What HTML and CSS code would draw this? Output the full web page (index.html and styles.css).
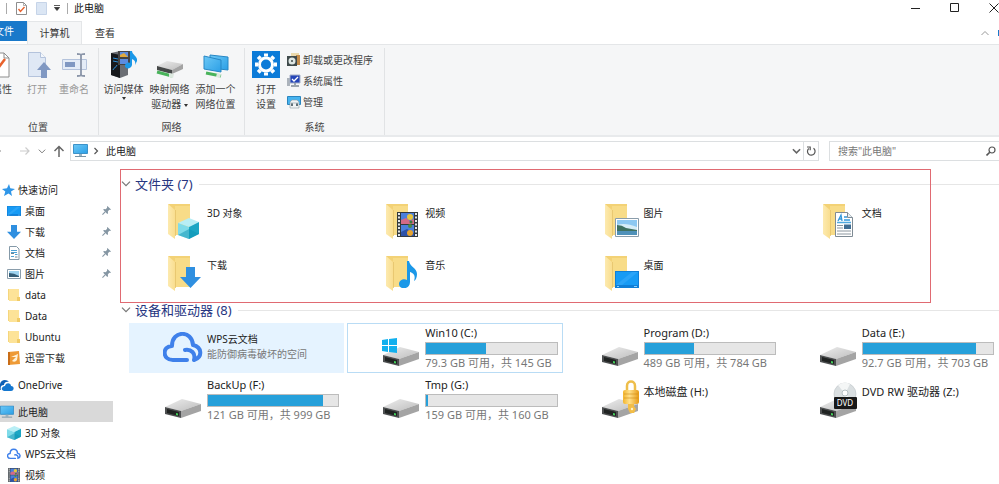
FILE: index.html
```html
<!DOCTYPE html>
<html lang="zh-CN">
<head>
    <meta charset="UTF-8">
    <meta name="viewport" content="width=device-width, initial-scale=1.0">
    <title>此电脑</title>
    <link rel="stylesheet" href="styles.css">
</head>
<body>
    <!-- Shared icons -->
    <svg class="sprite" aria-hidden="true">
        <defs>
            <linearGradient id="blueScreen" x1="0" y1="0" x2="1" y2="1">
                <stop offset="0" stop-color="#6cc8f6"/><stop offset="1" stop-color="#2b9fe6"/>
            </linearGradient>
            <linearGradient id="driveTop" x1="0" y1="0" x2="1" y2="1">
                <stop offset="0" stop-color="#ededed"/><stop offset="1" stop-color="#bdbdbd"/>
            </linearGradient>
            <linearGradient id="gold" x1="0" y1="0" x2="1" y2="0">
                <stop offset="0" stop-color="#f3b52d"/><stop offset=".4" stop-color="#ffe08a"/><stop offset="1" stop-color="#e79a14"/>
            </linearGradient>
            <linearGradient id="flap" x1="0" y1="0" x2="1" y2="0">
                <stop offset="0" stop-color="#fdeaaf"/><stop offset="1" stop-color="#f9de90"/>
            </linearGradient>
        </defs>
        <symbol id="folder" viewBox="0 0 40 49">
            <path d="M5 7h22v31H12z" fill="#f3d276"/>
            <path d="M12 9h15v29H12z" fill="#f8dc88"/>
            <path d="M5 7l7 6v29L5 37z" fill="url(#flap)"/>
            <path d="M12.500 13v26" stroke="#e5c36b" stroke-width=".8"/>
        </symbol>
        <symbol id="cube" viewBox="0 0 21 21">
            <path d="M0 5L11 0l10 4-10 5z" fill="#b8eef5"/>
            <path d="M0 5l11 4v12L0 17z" fill="#7fdbe9"/>
            <path d="M11 9l10-5v12l-10 5z" fill="#1ba6c4"/>
            <path d="M0 17l11-6 10 5-10 5z" fill="#0d93b4" opacity=".5"/>
        </symbol>
        <symbol id="film" viewBox="0 0 21 25">
            <path d="M0 0h21v25H0z" fill="#333a3e"/>
            <path d="M4 1h13v11H4zM4 13h13v11H4z" fill="#4b7fdb"/>
            <path d="M4 8l5-2 4 3 4-2v5H4z" fill="#d46a86"/>
            <path d="M4 20l6-3 7 4v3H4z" fill="#2e52a8"/>
            <circle cx="13" cy="5" r="3" fill="#e9c63b"/><circle cx="13" cy="14" r="2" fill="#4c8b3f"/>
            <circle cx="13" cy="21" r="3" fill="#e7a42f"/><circle cx="14" cy="10" r="1.5" fill="#377d3d"/>
            <path d="M2 1v24M19 1v24" stroke="#e4e7e9" stroke-width="2" stroke-dasharray="2 1.5"/>
        </symbol>
        <symbol id="photo" viewBox="0 0 24 19">
            <path d="M.5.5h23v18H.5z" fill="#fff" stroke="#8a9dab"/>
            <path d="M2 2h20v15H2z" fill="#8dc8f1"/>
            <path d="M2 7q8-3 20 2v4H2z" fill="#d7edf7"/>
            <path d="M2 7q5 0 9 3l11 2v1H2z" fill="#3f7160"/>
            <path d="M2 13h20v4H2z" fill="#4f91b9"/>
        </symbol>
        <symbol id="page" viewBox="0 0 18 25">
            <path d="M.5.5h12l5 5v19H.5z" fill="#fff" stroke="#7f8b94"/>
            <path d="M12.500.500v5h5" fill="#e6edf2" stroke="#7f8b94"/>
            <path d="M3 9l3-6 1 6M4 7h3M9 5h3M9 8h6" fill="none" stroke="#3298dc" stroke-width="1.300"/>
            <path d="M2 10.500h14" stroke="#4fa9df" stroke-width="1.500"/>
            <path d="M2 13.500h6M2 16h6M2 19h14M2 22h14" stroke="#8b969e"/>
            <path d="M9 12.500h7V17H9z" fill="#3f6d92"/>
        </symbol>
        <symbol id="arrow-down" viewBox="0 0 21 21">
            <path d="M6 0h9v10h6L10.500 21 0 10h6z" fill="#2f8fe0"/>
        </symbol>
        <symbol id="note" viewBox="0 0 18 27">
            <path d="M8 0h2c1 6 8 7 8 13 0 3-1 6-3 7 2-6-1-8-4-9v10c0 8-11 8-11 2 0-4 5-6 8-4z" fill="#1b98e8"/>
        </symbol>
        <symbol id="desktop" viewBox="0 0 24 17">
            <path d="M0 0h24v17H0z" fill="#0f7fd8"/>
            <path d="M1 1h22v13H1z" fill="#179bf5"/>
            <path d="M1 14L17 1h6L7 14z" fill="#2ba4f8"/>
            <path d="M2 15.500h2M19 15.500h3" stroke="#8fd0fb"/>
        </symbol>
        <symbol id="drive" viewBox="0 0 40 49">
            <path d="M2 32l17-8 19 5-20 7z" fill="url(#driveTop)"/>
            <path d="M18 36l20-7v7l-20 7z" fill="#a4a4a4"/>
            <path d="M2 32l16 4v7L2 39z" fill="#4d4f50"/>
            <path d="M4 34l12 3v4L4 38z" fill="#202322"/>
            <path d="M13 38l2 .5v2l-2-.5z" fill="#43d15a"/>
        </symbol>
        <symbol id="cloud" viewBox="0 0 40 31">
            <path d="M24 28H10C-1 28-1 14 9 14 9-2 29-2 30 13c9 2 10 12 1 15 2-7-3-11-9-10" fill="none" stroke="#3f80ea" stroke-width="4" stroke-linecap="round" stroke-linejoin="round"/>
        </symbol>
        <symbol id="monitor" viewBox="0 0 15 14">
            <path d="M.5.5h14v9H.5z" fill="url(#blueScreen)" stroke="#3d92c8"/>
            <path d="M6 10h3v2H6z" fill="#9cb3c1"/><path d="M2 12.500h11" stroke="#7894a5"/>
        </symbol>
        <symbol id="pin" viewBox="0 0 10 10">
            <path d="M6 0l4 4-1 .5-1-.2L6.500 6l.2 2-.8.800L1.300 4.200l.8-.9 2 .2L5.700 2l-.2-1z" fill="#8596a3"/>
            <path d="M3.500 6.500L.5 9.500" stroke="#8596a3" stroke-width="1.200"/>
        </symbol>
        <symbol id="mini-folder" viewBox="0 0 12 14">
            <path d="M0 1h10v11H0z" fill="#f5d67d"/><path d="M1 1h10v12H1z" fill="#fde398"/><path d="M9 9h3v4H9z" fill="#f1cb67"/>
        </symbol>
        <symbol id="check-page" viewBox="0 0 11 13">
            <path d="M.5.5h7l3 3v9H.5z" fill="#fff" stroke="#8d8d8d"/>
            <path d="M7.500.500v3h3" fill="none" stroke="#8d8d8d" stroke-width=".7"/>
            <path d="M2.500 7l2 2.500L8.500 5" fill="none" stroke="#e8622d" stroke-width="1.400"/>
        </symbol>
        <symbol id="chevron" viewBox="0 0 10 6">
            <path d="M1 .7l4 4 4-4" fill="none" stroke="currentColor" stroke-width="1.200"/>
        </symbol>
    </svg>

    <header class="titlebar">
        <span class="divider"></span>
        <svg class="quick-icon" viewBox="0 0 11 13"><use href="#check-page"/></svg>
        <svg class="quick-icon" viewBox="0 0 11 13"><path d="M.5.5h10v12H.5z" fill="#dbe6f4" stroke="#c6d4e8"/></svg>
        <svg class="quick-more" viewBox="0 0 6 6"><path d="M0 .5h6M.5 2.500h5L3 5.500z" fill="#333" stroke="#333" stroke-width=".8"/></svg>
        <span class="divider"></span>
        <h1>此电脑</h1>
        <div class="window-buttons">
            <button aria-label="最小化"><svg viewBox="0 0 10 10"><path d="M0 5.500h9" stroke="#222"/></svg></button>
            <button aria-label="最大化"><svg viewBox="0 0 10 10"><path d="M.5.5h8v8h-8z" fill="none" stroke="#222"/></svg></button>
            <button aria-label="关闭"><svg viewBox="0 0 10 10"><path d="M.5.5l9 9M9.500.500l-9 9" stroke="#222"/></svg></button>
        </div>
    </header>

    <nav class="tabs">
        <button class="tab file">文件</button>
        <button class="tab active">计算机</button>
        <button class="tab">查看</button>
        <div class="tabs-end">
            <svg class="collapse" viewBox="0 0 10 6"><path d="M1.500 5L5 1.500 8.500 5" fill="none" stroke="#999"/></svg>
            <span class="help"></span>
        </div>
    </nav>

    <section class="ribbon">
        <div class="group location">
            <div class="tools">
                <button class="tool clipped">
                    <svg viewBox="0 0 24 28"><path d="M1 3h17l5 5v19H1z" fill="#fff" stroke="#8d8d8d"/><path d="M18 3v5h5" fill="none" stroke="#8d8d8d"/><path d="M5 15l5 6 9-12" fill="none" stroke="#e8622d" stroke-width="2.500"/></svg>
                    <span>属性</span>
                </button>
                <button class="tool" disabled>
                    <svg viewBox="0 0 28 28"><path d="M5.500 2.500h12l5 5v19h-17z" fill="#dfe8f5" stroke="#b4c3dc"/><path d="M17.500 2.500v5h5" fill="#f3f7fc" stroke="#b4c3dc"/><path d="M18 28v-8h-4l7-8 7 8h-4v8z" fill="#8098c2"/></svg>
                    <span>打开</span>
                </button>
                <button class="tool rename" disabled>
                    <svg viewBox="0 0 28 28"><path d="M2.500 9.500h24v10h-24z" fill="#e4ecf7" stroke="#b4c3dc"/><path d="M5 12h10v5H5z" fill="#8098c2"/><path d="M17 4c3 0 4 0 4 2v18c0 2-1 2-4 2M25 4c-3 0-4 0-4 2v18c0 2 1 2 4 2" fill="none" stroke="#8b96a9" stroke-width="1.800"/></svg>
                    <span>重命名</span>
                </button>
            </div>
            <h2>位置</h2>
        </div>

        <div class="group network">
            <div class="tools">
                <button class="tool">
                    <svg viewBox="0 0 28 28"><path d="M1 3l9-2 8 2v22l-8 3-9-3z" fill="#6b6e74"/><path d="M1 3l9 2v23l-9-3z" fill="#17191c"/><path d="M3 8l5 1M3 11l5 1M3 20c1-3 3-2 4-5" stroke="#2d8fd8" fill="none"/><path d="M8 1h12v14H8z" fill="#444"/><path d="M10 2h8v5h-8zM10 9h8v5h-8z" fill="#5c8ce0"/><path d="M10 5l4-2 4 4h-8z" fill="#e0a93e"/><path d="M20 1h2c0 4 6 5 5 10l-2 4c1-4-1-5-3-6v6c-1 5-8 4-7 0 1-2 3-3 5-2z" fill="#1b98e8"/></svg>
                    <span>访问媒体</span>
                    <i class="caret"></i>
                </button>
                <button class="tool">
                    <svg viewBox="0 0 28 28"><path d="M1 16l10-5 16 3-11 6z" fill="url(#driveTop)"/><path d="M16 20l11-6v5l-11 5z" fill="#a3a3a3"/><path d="M1 16l15 4v4L1 20z" fill="#454848"/><path d="M1 22l15 4" stroke="#49b35b" stroke-width="3"/><path d="M13 23l5 1-1 4-4-1z" fill="#dce8df"/></svg>
                    <span>映射网络<br>驱动器 <i class="caret"></i></span>
                </button>
                <button class="tool">
                    <svg viewBox="0 0 28 28"><path d="M8 5l18 2v13L8 18z" fill="url(#blueScreen)" stroke="#2787c5"/><path d="M2 6l17 4v12L2 19z" fill="url(#blueScreen)" stroke="#2787c5"/><path d="M4 23l15 3" stroke="#49b35b" stroke-width="3"/><path d="M15 23l4 1-1 4-4-1z" fill="#dce8df"/></svg>
                    <span>添加一个<br>网络位置</span>
                </button>
            </div>
            <h2>网络</h2>
        </div>

        <div class="group system">
            <div class="tools">
                <button class="tool settings">
                    <svg viewBox="0 0 28 28"><path d="M0 1h28v27H0z" fill="#0c7bd8"/><circle cx="14" cy="14.500" r="6.500" fill="none" stroke="#fff" stroke-width="3"/><path d="M14 3.500v3M14 22.500v3M3 14.500h3M22 14.500h3M6.200 6.700l2.200 2.200M19.600 20.100l2.200 2.200M21.800 6.700l-2.200 2.200M8.400 20.100l-2.200 2.200" stroke="#fff" stroke-width="4"/></svg>
                    <span>打开<br>设置</span>
                </button>
                <div class="links">
                    <button class="link-tool"><svg viewBox="0 0 14 14"><path d="M4 0h8v12H4z" fill="#ead9ac"/><path d="M9 2h4v10H9z" fill="#c28b4b"/><path d="M0 3h10v10H0z" fill="#3f4a4b"/><circle cx="5" cy="8" r="3.500" fill="#dfe7e4"/><circle cx="5" cy="8" r="1" fill="#3f4a4b"/></svg>卸载或更改程序</button>
                    <button class="link-tool"><svg viewBox="0 0 14 14"><path d="M0 4h3v8H0z" fill="#acb3bb"/><path d="M3 1h10v8H3z" fill="#2545b8" stroke="#a6b1c7"/><path d="M5 5l2 2 4-4" fill="none" stroke="#fff" stroke-width="1.300"/><path d="M7 9h2v2h3v2H4v-2h3z" fill="#9ba4ad"/></svg>系统属性</button>
                    <button class="link-tool"><svg viewBox="0 0 14 14"><path d="M.5 1.500h13v8H.5z" fill="#45b3ef" stroke="#2a85be"/><path d="M3 7l2-2h5l2 2v6H3z" fill="#f1f3f4" stroke="#8b9aa3" stroke-width=".6"/><path d="M5 8v3M10 8v3" stroke="#334750" stroke-width="1.500"/><path d="M3 8h9" stroke="#b1bec5"/></svg>管理</button>
                </div>
            </div>
            <h2>系统</h2>
        </div>
    </section>

    <div class="addressbar">
        <div class="nav-buttons">
            <button aria-label="后退"><svg viewBox="0 0 12 12"><path d="M-8 6H1" stroke="#888" stroke-width="1.200"/></svg></button>
            <button aria-label="前进"><svg viewBox="0 0 12 12"><path d="M1 6h9M6.500 2.500L10 6 6.500 9.500" fill="none" stroke="#ccc" stroke-width="1.200"/></svg></button>
            <button aria-label="最近位置"><svg class="small" viewBox="0 0 10 6"><use href="#chevron"/></svg></button>
            <button aria-label="上移"><svg viewBox="0 0 12 12"><path d="M6 12V2M1.500 6L6 1.500 10.500 6" fill="none" stroke="#666" stroke-width="1.500"/></svg></button>
        </div>
        <div class="path">
            <svg class="path-icon" viewBox="0 0 15 14"><use href="#monitor"/></svg>
            <svg class="path-arrow" viewBox="0 0 6 8"><path d="M1.500 1L4.500 4l-3 3" fill="none" stroke="#555" stroke-width="1.200"/></svg>
            <a href="#">此电脑</a>
            <button class="path-drop" aria-label="展开"><svg viewBox="0 0 10 6"><path d="M1 1l4 4 4-4" fill="none" stroke="#666" stroke-width="1.800"/></svg></button>
            <button class="refresh" aria-label="刷新"><svg viewBox="0 0 10 10"><path d="M7.500 2.300A3.800 3.800 0 1 1 2.800 2.500M1 1h3.200v3.200" fill="none" stroke="#555" stroke-width="1.200"/></svg></button>
        </div>
        <label class="search">
            <input type="text" placeholder="搜索&quot;此电脑&quot;" aria-label="搜索">
            <svg viewBox="0 0 10 10"><circle cx="6" cy="4" r="3" fill="none" stroke="#555" stroke-width="1.200"/><path d="M3.800 6.200L.5 9.500" stroke="#555" stroke-width="1.600"/></svg>
        </label>
    </div>

    <div class="main">
        <aside class="sidebar">
            <ul>
                <li class="top"><svg viewBox="0 0 14 14"><path d="M8 1l1.300 4.300L14 6l-4 2.500 1 4.500-3.500-2.500L3 13l1.300-4.500L1 6l5-.7z" fill="#2f96e8"/></svg><a href="#">快速访问</a></li>
                <li><svg viewBox="0 1 14 12"><use href="#desktop" y="1" width="14" height="12"/></svg><a href="#">桌面</a><svg class="pin"><use href="#pin"/></svg></li>
                <li><svg viewBox="0 0 14 14"><use href="#arrow-down" width="14" height="14"/></svg><a href="#">下载</a><svg class="pin"><use href="#pin"/></svg></li>
                <li><svg viewBox="0 0 14 14"><path d="M2.500.500h7l2.500 2.500v10.500H2.500z" fill="#fff" stroke="#8499a8"/><path d="M4 4.500h6M4 10.500h3M8 8.500h2.500M4 6.500h6" stroke="#4da2d5"/><path d="M4 7.500h3M8 11h2.500" stroke="#72848f"/></svg><a href="#">文档</a><svg class="pin"><use href="#pin"/></svg></li>
                <li><svg viewBox="0 0 14 14"><path d="M.5 2.500h13v9H.5z" fill="#fff" stroke="#8a9dab"/><path d="M2 4h10v6H2z" fill="#9ed2ee"/><path d="M2 6q5 0 10 3v1H2z" fill="#355d76"/></svg><a href="#">图片</a><svg class="pin"><use href="#pin"/></svg></li>
                <li><svg viewBox="0 0 14 14"><use href="#mini-folder"/></svg><a href="#">data</a></li>
                <li><svg viewBox="0 0 14 14"><use href="#mini-folder"/></svg><a href="#">Data</a></li>
                <li><svg viewBox="0 0 14 14"><use href="#mini-folder"/></svg><a href="#">Ubuntu</a></li>
                <li><svg viewBox="0 0 14 14"><path d="M1 1l11-1 1 13-12 1z" fill="#ee9a36"/><path d="M1 1h2v13H1z" fill="#c96d17"/><path d="M4 6l7-3-1 6q-2 3-5 1l4-4z" fill="#fff2d8"/></svg><a href="#">迅雷下载</a></li>
            </ul>
            <ul>
                <li class="top flush"><svg viewBox="0 0 14 14"><path d="M-3 11c-1-4 2-5 3-5 1-5 7-5 9-2-3-1-5 1-5 3-3 0-4 2-3 5z" fill="#0e5fb5"/><path d="M4 13c-4-1-2-5 1-5 1-4 6-3 6 0 4 0 3 5 0 5z" fill="#1577cf"/></svg><a href="#">OneDrive</a></li>
            </ul>
            <ul>
                <li class="top flush selected"><svg viewBox="0 0 15 14"><use href="#monitor"/></svg><a href="#">此电脑</a></li>
                <li><svg viewBox="0 0 14 14"><use href="#cube" width="14" height="14"/></svg><a href="#">3D 对象</a></li>
                <li><svg viewBox="0 0 14 14"><use href="#cloud" y="1" width="14" height="12"/></svg><a href="#">WPS云文档</a></li>
                <li><svg viewBox="0 0 14 14"><use href="#film" x="1" width="12" height="14"/></svg><a href="#">视频</a></li>
            </ul>
        </aside>

        <main class="content">
            <section class="folders">
                <h2><svg viewBox="0 0 10 6"><use href="#chevron"/></svg>文件夹 (7)</h2>
                <div class="items">
                    <div class="item"><svg viewBox="0 0 40 49"><use href="#folder"/><use href="#cube" x="15" y="21" width="21" height="21"/></svg><div class="info"><p>3D 对象</p></div></div>
                    <div class="item"><svg viewBox="0 0 40 49"><use href="#folder"/><use href="#film" x="16" y="15" width="21" height="25"/></svg><div class="info"><p>视频</p></div></div>
                    <div class="item"><svg viewBox="0 0 40 49"><use href="#folder"/><use href="#photo" x="15" y="21" width="24" height="19"/></svg><div class="info"><p>图片</p></div></div>
                    <div class="item"><svg viewBox="0 0 40 49"><use href="#folder"/><use href="#page" x="17" y="15" width="18" height="25"/></svg><div class="info"><p>文档</p></div></div>
                    <div class="item"><svg viewBox="0 0 40 49"><use href="#folder"/><use href="#arrow-down" x="17" y="18" width="21" height="21"/></svg><div class="info"><p>下载</p></div></div>
                    <div class="item"><svg viewBox="0 0 40 49"><use href="#folder"/><use href="#note" x="18" y="12" width="18" height="27"/></svg><div class="info"><p>音乐</p></div></div>
                    <div class="item"><svg viewBox="0 0 40 49"><use href="#folder"/><use href="#desktop" x="15" y="22" width="24" height="17"/></svg><div class="info"><p>桌面</p></div></div>
                </div>
            </section>

            <section class="devices">
                <h2><svg viewBox="0 0 10 6"><use href="#chevron"/></svg>设备和驱动器 (8)</h2>
                <div class="items">
                    <div class="item hovered"><svg viewBox="0 0 40 49"><use href="#cloud" y="9" width="40" height="31"/></svg><div class="info"><p>WPS云文档</p><p class="meta">能防御病毒破坏的空间</p></div></div>
                    <div class="item focused"><svg viewBox="0 0 40 49"><use href="#drive"/><path d="M1 17l6-1v6H1zM8 16l8-1v7H8zM1 23h6v6l-6-1zM8 23h8v7l-8-1z" fill="#12b0ee"/></svg><div class="info disk"><p>Win10 (C:)</p><div class="bar"><div class="used" style="width: 46%"></div></div><p class="meta">79.3 GB 可用，共 145 GB</p></div></div>
                    <div class="item"><svg viewBox="0 0 40 49"><use href="#drive"/></svg><div class="info disk"><p>Program (D:)</p><div class="bar"><div class="used" style="width: 38%"></div></div><p class="meta">489 GB 可用，共 784 GB</p></div></div>
                    <div class="item"><svg viewBox="0 0 40 49"><use href="#drive"/></svg><div class="info disk"><p>Data (E:)</p><div class="bar"><div class="used" style="width: 87%"></div></div><p class="meta">92.7 GB 可用，共 703 GB</p></div></div>
                    <div class="item"><svg viewBox="0 0 40 49"><use href="#drive"/></svg><div class="info disk"><p>BackUp (F:)</p><div class="bar"><div class="used" style="width: 88%"></div></div><p class="meta">121 GB 可用，共 999 GB</p></div></div>
                    <div class="item"><svg viewBox="0 0 40 49"><use href="#drive"/></svg><div class="info disk"><p>Tmp (G:)</p><div class="bar"><div class="used" style="width: 1%"></div></div><p class="meta">159 GB 可用，共 160 GB</p></div></div>
                    <div class="item"><svg viewBox="0 0 40 49"><use href="#drive"/><path d="M27 17v-6c0-6 8-6 8 0v6" fill="none" stroke="#eebe4a" stroke-width="2.500"/><path d="M28 28h6v3l2 3-2 4h-4l-2-4z" fill="#f2bd48"/><circle cx="32" cy="34" r="1.200" fill="#fff3c9"/><rect x="23" y="15" width="16" height="14" rx="2" fill="url(#gold)"/><path d="M24 19h14M24 23h14" stroke="#d08b16" stroke-width=".6"/></svg><div class="info drive-name"><p>本地磁盘 (H:)</p></div></div>
                    <div class="item"><svg viewBox="0 0 40 49"><use href="#drive"/><circle cx="27" cy="19" r="11" fill="#dadfe1" stroke="#bcc3c6" stroke-width=".6"/><path d="M27 19L20 10q6-4 12-1zM27 19l9 7q-5 5-11 4z" fill="#f4f6f6"/><circle cx="27" cy="18" r="3" fill="#fff" stroke="#b7c0c4"/><rect x="16" y="22" width="23" height="12" rx="1" fill="#191919"/><text x="27" y="31" class="dvd-label">DVD</text></svg><div class="info drive-name"><p>DVD RW 驱动器 (Z:)</p></div></div>
                </div>
            </section>
        </main>
    </div>
</body>
</html>
```

FILE: styles.css
```css
* {
    box-sizing: border-box;
}
body {
    margin: 0;
    height: 100vh;
    display: flex;
    flex-direction: column;
    overflow: hidden;
    background-color: #fff;
    color: #222;
    font-family: "Noto Sans", "Noto Sans CJK SC", sans-serif;
    font-size: 10px;
    line-height: 14px;
}
h1, h2, p, ul {
    margin: 0;
    padding: 0;
    font-size: inherit;
    font-weight: normal;
}
ul {
    list-style: none;
}
svg {
    display: block;
    flex-shrink: 0;
}
a {
    color: inherit;
    text-decoration: none;
}
button {
    padding: 0;
    border: none;
    background: none;
    color: inherit;
    font: inherit;
    white-space: nowrap;
}
.sprite {
    position: absolute;
    width: 0;
    height: 0;
}

/* Title bar */
.titlebar {
    display: flex;
    align-items: center;
    height: 16px;
    padding-left: 6px;
    flex-shrink: 0;
}
.divider {
    width: 1px;
    height: 11px;
    background-color: #aaa;
}
.quick-icon {
    width: 11px;
    height: 13px;
    margin-left: 9px;
}
.quick-more {
    width: 6px;
    height: 6px;
    margin: 0 7px;
}
.titlebar h1 {
    margin-left: 6px;
    color: #111;
}
.window-buttons {
    display: flex;
    margin-left: auto;
}
.window-buttons button {
    width: 39px;
    height: 16px;
}
.window-buttons button:last-child {
    width: 10px;
    margin-left: 15px;
}
.window-buttons svg {
    width: 10px;
    height: 10px;
    margin: 0 auto;
}

/* Tabs */
.tabs {
    display: flex;
    height: 28px;
    padding-top: 5px;
    flex-shrink: 0;
}
.tab {
    padding: 0 13px;
    color: #333;
}
.tab.file {
    display: flex;
    justify-content: flex-end;
    align-items: center;
    width: 27px;
    height: 20px;
    background-color: #1979ca;
    color: #fff;
}
.tab.active {
    width: 55px;
    padding: 0;
    border: 1px solid #e4e6e8;
    border-bottom: none;
    background-color: #f5f6f7;
}
.tabs-end {
    display: flex;
    align-items: center;
    gap: 8px;
    margin-left: auto;
}
.collapse {
    width: 10px;
    height: 6px;
}
.help {
    width: 1px;
    height: 6px;
    background-color: #1979ca;
}

/* Ribbon */
.ribbon {
    display: flex;
    height: 93px;
    padding-top: 3px;
    flex-shrink: 0;
    border-top: 1px solid #e4e6e8;
    border-bottom: 2px solid #e8eaec;
    background-color: #f5f6f7;
    color: #444;
}
.group {
    display: flex;
    flex-direction: column;
    justify-content: space-between;
    border-right: 1px solid #e1e3e5;
    text-align: center;
}
.group h2 {
    height: 16px;
    line-height: 16px;
}
.location {
    width: 99px;
}
.location h2 {
    padding-right: 22px;
}
.network {
    width: 146px;
}
.system {
    width: 140px;
}
.tools {
    display: flex;
}
.tool {
    display: flex;
    flex-direction: column;
    align-items: center;
    width: 45px;
    line-height: 15px;
}
.tool > svg {
    width: 28px;
    height: 28px;
    margin: 2px 0 4px;
}
.tool.clipped {
    width: 12px;
    align-items: flex-end;
    overflow: hidden;
}
.tool:disabled {
    color: #999;
}
.location .tool:disabled {
    width: 50px;
}
.location .tool.rename {
    width: 24px;
}
.network .tools {
    padding-left: 2px;
    gap: 1px;
}
.tool.settings {
    width: 42px;
}
.caret {
    display: inline-block;
    border: 2px solid transparent;
    border-top: 3px solid #333;
    border-bottom: none;
    vertical-align: middle;
}
.links {
    display: flex;
    flex-direction: column;
    align-items: flex-start;
    gap: 7px;
    padding-top: 5px;
}
.link-tool {
    display: flex;
    align-items: center;
    gap: 2px;
}
.link-tool svg {
    width: 14px;
    height: 14px;
}

/* Address bar */
.addressbar {
    display: flex;
    align-items: center;
    height: 28px;
    flex-shrink: 0;
    color: #222;
}
.nav-buttons {
    display: flex;
    align-items: center;
    justify-content: space-between;
    width: 70px;
    padding-right: 5px;
    color: #777;
}
.nav-buttons svg {
    width: 12px;
    height: 12px;
}
.nav-buttons svg.small {
    width: 8px;
    height: 5px;
}
.path, .search {
    display: flex;
    align-items: center;
    height: 20px;
    border: 1px solid #dcdfe1;
}
.path {
    flex-grow: 1;
    padding-left: 2px;
}
.path-icon {
    width: 15px;
    height: 14px;
}
.path-arrow {
    width: 6px;
    height: 8px;
    margin: 0 7px 0 5px;
}
.path-drop {
    margin-left: auto;
    padding: 0 2px;
}
.path-drop svg {
    width: 9px;
    height: 6px;
}
.refresh {
    height: 18px;
    padding: 0 2px;
    border-left: 1px solid #dcdfe1;
}
.refresh svg {
    width: 10px;
    height: 10px;
}
.search {
    width: 170px;
    margin-left: 10px;
    padding: 0 3px 0 8px;
    border-right: none;
}
.search input {
    flex-grow: 1;
    min-width: 0;
    padding: 0;
    border: none;
    outline: none;
    font: inherit;
}
.search input::placeholder {
    color: #777;
}
.search svg {
    width: 10px;
    height: 10px;
}

/* Navigation tree */
.main {
    display: flex;
    flex-grow: 1;
    min-height: 0;
}
.sidebar {
    display: flex;
    flex-direction: column;
    gap: 6px;
    width: 113px;
    padding-top: 14px;
    flex-shrink: 0;
    overflow: hidden;
}
.sidebar li {
    display: flex;
    align-items: center;
    gap: 4px;
    height: 21px;
    padding: 0 2px 0 7px;
}
.sidebar li.top {
    gap: 3px;
    padding-left: 1px;
}
.sidebar li.flush {
    gap: 4px;
    padding-left: 0;
}
.sidebar li.selected {
    background-color: #d9d9d9;
}
.sidebar svg {
    width: 14px;
    height: 14px;
}
.sidebar .pin {
    width: 9px;
    height: 9px;
    margin-left: auto;
}

/* Folder and device lists */
.content {
    flex-grow: 1;
    min-width: 0;
    padding: 8px 0 0 8px;
}
.content h2 {
    display: flex;
    align-items: center;
    height: 22px;
    margin-bottom: 2px;
    color: #26357f;
    font-size: 13px;
}
.content h2::after {
    content: "";
    flex-grow: 1;
    height: 1px;
    margin-left: 6px;
    background-color: #e6e6e6;
}
.content h2 svg {
    width: 10px;
    height: 6px;
    margin-right: 4px;
    color: #777;
}
.items {
    display: grid;
    grid-template-columns: repeat(4, 1fr);
    gap: 3px;
    padding-left: 8px;
}
.folders {
    position: relative;
    margin-bottom: 1px;
}
/* Red outline drawn over the folder group */
.folders::after {
    content: "";
    position: absolute;
    inset: -4px 68px -5px -1px;
    border: 1px solid #e06a72;
    pointer-events: none;
}
.item {
    display: flex;
    gap: 4px;
    height: 50px;
    padding: 0 4px 0 34px;
    border: 1px solid transparent;
    margin: 0 0 -1px;
}
.item > svg {
    width: 40px;
    height: 49px;
    margin: -1px 0 0 -1px;
}
.item.hovered {
    background-color: #e5f3ff;
}
.item.focused {
    border-color: #b9dcf5;
}
.info {
    flex-grow: 1;
    min-width: 0;
    padding-top: 8px;
    line-height: 15px;
    white-space: nowrap;
}
.info.disk {
    padding-top: 1px;
    font-size: 11px;
}
.info.drive-name {
    font-size: 11px;
}
.info .meta {
    color: #777;
}
.bar {
    height: 13px;
    margin-top: 2px;
    border: 1px solid #bcbcbc;
    background-color: #e6e6e6;
}
.used {
    height: 100%;
    background-color: #26a0da;
}
.dvd-label {
    fill: #fff;
    font-size: 8px;
    text-anchor: middle;
}
```
